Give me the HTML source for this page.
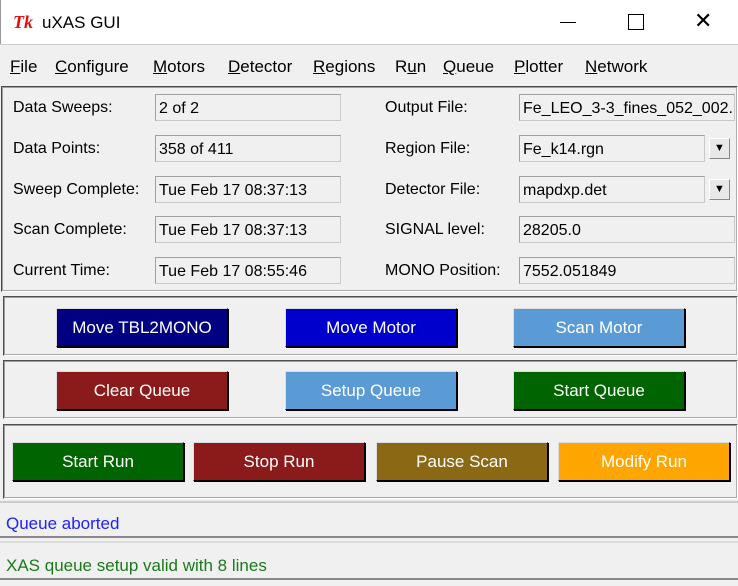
<!DOCTYPE html>
<html><head><style>
*{margin:0;padding:0;box-sizing:border-box}
body{width:738px;height:586px;background:#f0f0f0;font-family:"Liberation Sans",sans-serif;font-size:16px;color:#000;position:relative;overflow:hidden}
.a{position:absolute;white-space:nowrap}
.m{position:absolute;top:57px;font-size:17px;white-space:nowrap}
.e{position:absolute;height:27px;border:1px solid #c8c8c8;border-top-color:#a0a0a0;border-left-color:#a0a0a0;background:#f0f0f0;padding:5px 0 0 3px;overflow:hidden}
.b{position:absolute;height:39px;color:#fff;text-align:center;line-height:37px;border:1px solid #000;border-top-color:#ddd;border-left-color:#ddd;box-shadow:1px 1px 0 #000;font-size:17px}
.fr{position:absolute;border:2px groove #d8d8d8;border-color:#a0a0a0 #fff #fff #a0a0a0}
.dd{position:absolute;width:21px;height:21px;background:#e8e8e8;border:1px solid #888;border-top-color:#fff;border-left-color:#fff;font-size:11px;text-align:center;line-height:19px}
u{text-decoration:underline}
</style></head><body>
<div class="a" style="left:0;top:0;width:738px;height:44px;background:#fff;border-left:1px solid #999"></div>
<div class="a" style="left:13px;top:12px;color:#e01010;font-style:italic;font-weight:bold;font-family:'Liberation Serif',serif;font-size:18px">Tk</div>
<div class="a" style="left:42px;top:13px;font-size:17px">uXAS GUI</div>
<div class="a" style="left:560px;top:22px;width:16px;height:1px;background:#000"></div>
<div class="a" style="left:628px;top:14px;width:16px;height:16px;border:1px solid #000"></div>
<div class="a" style="left:694px;top:8px;font-size:22px;font-weight:100">✕</div>
<div class="a" style="left:0;top:44px;width:738px;height:1px;background:#ccc"></div>
<div class="m" style="left:10px"><u>F</u>ile</div>
<div class="m" style="left:55px"><u>C</u>onfigure</div>
<div class="m" style="left:153px"><u>M</u>otors</div>
<div class="m" style="left:228px"><u>D</u>etector</div>
<div class="m" style="left:313px"><u>R</u>egions</div>
<div class="m" style="left:395px">R<u>u</u>n</div>
<div class="m" style="left:443px"><u>Q</u>ueue</div>
<div class="m" style="left:514px"><u>P</u>lotter</div>
<div class="m" style="left:585px"><u>N</u>etwork</div>
<div class="fr" style="left:1px;top:86px;width:737px;height:206px"></div>
<div class="a" style="left:13px;top:99px">Data Sweeps:</div>
<div class="a" style="left:13px;top:140px">Data Points:</div>
<div class="a" style="left:13px;top:181px">Sweep Complete:</div>
<div class="a" style="left:13px;top:221px">Scan Complete:</div>
<div class="a" style="left:13px;top:262px">Current Time:</div>
<div class="e" style="left:155px;top:94px;width:186px">2 of 2</div>
<div class="e" style="left:155px;top:135px;width:186px">358 of 411</div>
<div class="e" style="left:155px;top:176px;width:186px">Tue Feb 17 08:37:13</div>
<div class="e" style="left:155px;top:216px;width:186px">Tue Feb 17 08:37:13</div>
<div class="e" style="left:155px;top:257px;width:186px">Tue Feb 17 08:55:46</div>
<div class="a" style="left:385px;top:99px">Output File:</div>
<div class="a" style="left:385px;top:140px">Region File:</div>
<div class="a" style="left:385px;top:181px">Detector File:</div>
<div class="a" style="left:385px;top:221px">SIGNAL level:</div>
<div class="a" style="left:385px;top:262px">MONO Position:</div>
<div class="e" style="left:519px;top:94px;width:216px">Fe_LEO_3-3_fines_052_002.</div>
<div class="e" style="left:519px;top:135px;width:186px">Fe_k14.rgn</div>
<div class="e" style="left:519px;top:176px;width:186px">mapdxp.det</div>
<div class="e" style="left:519px;top:216px;width:216px">28205.0</div>
<div class="e" style="left:519px;top:257px;width:216px">7552.051849</div>
<div class="dd" style="left:709px;top:138px">▼</div>
<div class="dd" style="left:709px;top:179px">▼</div>
<div class="fr" style="left:3px;top:296px;width:735px;height:60px"></div>
<div class="b" style="left:56px;top:308px;width:172px;background:#000080">Move TBL2MONO</div>
<div class="b" style="left:285px;top:308px;width:172px;background:#0000cd">Move Motor</div>
<div class="b" style="left:513px;top:308px;width:172px;background:#5b9bd5">Scan Motor</div>
<div class="fr" style="left:3px;top:360px;width:735px;height:59px"></div>
<div class="b" style="left:56px;top:371px;width:172px;background:#8b1a1a">Clear Queue</div>
<div class="b" style="left:285px;top:371px;width:172px;background:#5b9bd5">Setup Queue</div>
<div class="b" style="left:513px;top:371px;width:172px;background:#006400">Start Queue</div>
<div class="fr" style="left:3px;top:424px;width:735px;height:75px"></div>
<div class="b" style="left:12px;top:442px;width:172px;background:#006400">Start Run</div>
<div class="b" style="left:193px;top:442px;width:172px;background:#8b1a1a">Stop Run</div>
<div class="b" style="left:376px;top:442px;width:172px;background:#8b6914">Pause Scan</div>
<div class="b" style="left:558px;top:442px;width:172px;background:#ffa500">Modify Run</div>
<div class="a" style="left:0;top:501px;width:738px;height:2px;background:#ccc"></div>
<div class="a" style="left:6px;top:514px;color:#2020ff;font-size:17px">Queue aborted</div>
<div class="a" style="left:0;top:536px;width:738px;height:2px;background:#888"></div>
<div class="a" style="left:0;top:541px;width:738px;height:2px;background:#ddd"></div>
<div class="a" style="left:6px;top:556px;color:#1a7a1a;font-size:17px">XAS queue setup valid with 8 lines</div>
<div class="a" style="left:0;top:578px;width:738px;height:2px;background:#888"></div>
</body></html>
